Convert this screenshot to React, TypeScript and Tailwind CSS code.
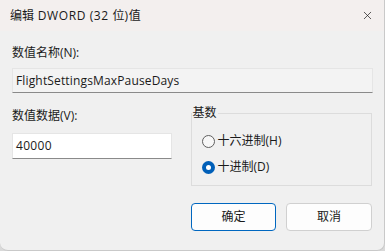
import { X } from 'lucide-react';

const font = { fontFamily: '"Segoe UI", "Open Sans", "Noto Sans CJK SC", sans-serif' };

function Radio({ checked, label }: { checked?: boolean; label: string }) {
    return (
        <div className="flex items-center gap-[3px] h-[16px]">
            {checked ? (
                <span className="w-[13px] h-[13px] rounded-full bg-[#005fb8] flex items-center justify-center">
                    <span className="w-[5px] h-[5px] rounded-full bg-white" />
                </span>
            ) : (
                <span className="w-[13px] h-[13px] rounded-full border border-[#5f5f5f] bg-[#f7f7f7]" />
            )}
            <span className="text-[12px] text-[#1a1a1a]">{label}</span>
        </div>
    );
}

export default function App() {
    return (
        <div className="w-[385px] h-[251px] bg-[#d9d9d9] overflow-hidden" style={font}>
            <div className="w-[385px] h-[251px] bg-[#f0f0f0] border-r border-b border-[#c9c9c9] rounded-br-[8px] rounded-bl-[8px] flex flex-col text-[#1a1a1a]">
                {/* title bar */}
                <div className="h-[31px] bg-[#f3efee] flex items-center pl-[10px] pr-[10px] shrink-0">
                    <span className="text-[12px] flex-1">
                        编辑<span className="tracking-[0.6px]"> DWORD (32 </span>位<span className="tracking-[0.6px]">)</span>值
                    </span>
                    <X className="w-[13px] h-[13px] text-[#1a1a1a]" strokeWidth={1.3} />
                </div>

                <div className="px-[12px] pt-[14px] flex flex-col">
                    <div className="text-[12px] h-[16px] leading-[16px]">数值名称(N):</div>
                    <div className="mt-[7px] h-[25px] w-[361px] bg-[#f3f3f3] border border-[#e5e5e5] border-b-[#8a8a8a] flex items-center pl-[3px] text-[12px] tracking-[0.15px]">
                        FlightSettingsMaxPauseDays
                    </div>

                    <div className="flex mt-[13px]">
                        <div className="flex flex-col w-[174px]">
                            <div className="text-[12px] h-[16px] leading-[16px] mt-[2px]">数值数据(V):</div>
                            <div className="mt-[9px] h-[26px] w-[160px] bg-white border border-[#e5e5e5] border-b-[#8a8a8a] flex items-center pl-[3px] text-[12px] tracking-[0.3px]">
                                40000
                            </div>
                        </div>

                        <div className="relative mt-[7px] w-[182px] h-[73px] border border-[#dcdcdc] ml-[5px]">
                            <span className="absolute -top-[9px] left-[0px] bg-[#f0f0f0] px-[1px] text-[12px] leading-[16px]">基数</span>
                            <div className="flex flex-col gap-[10px] pl-[10px] pt-[19px]">
                                <Radio label="十六进制(H)" />
                                <Radio checked label="十进制(D)" />
                            </div>
                        </div>
                    </div>

                    <div className="flex justify-end gap-[10px] mt-[17px]">
                        <button className="w-[85px] h-[28px] rounded-[4px] bg-[#fdfdfd] border border-[#0067c0] text-[12px]">确定</button>
                        <button className="w-[86px] h-[28px] rounded-[4px] bg-[#fdfdfd] border border-[#d0d0d0] text-[12px]">取消</button>
                    </div>
                </div>
            </div>
        </div>
    );
}
